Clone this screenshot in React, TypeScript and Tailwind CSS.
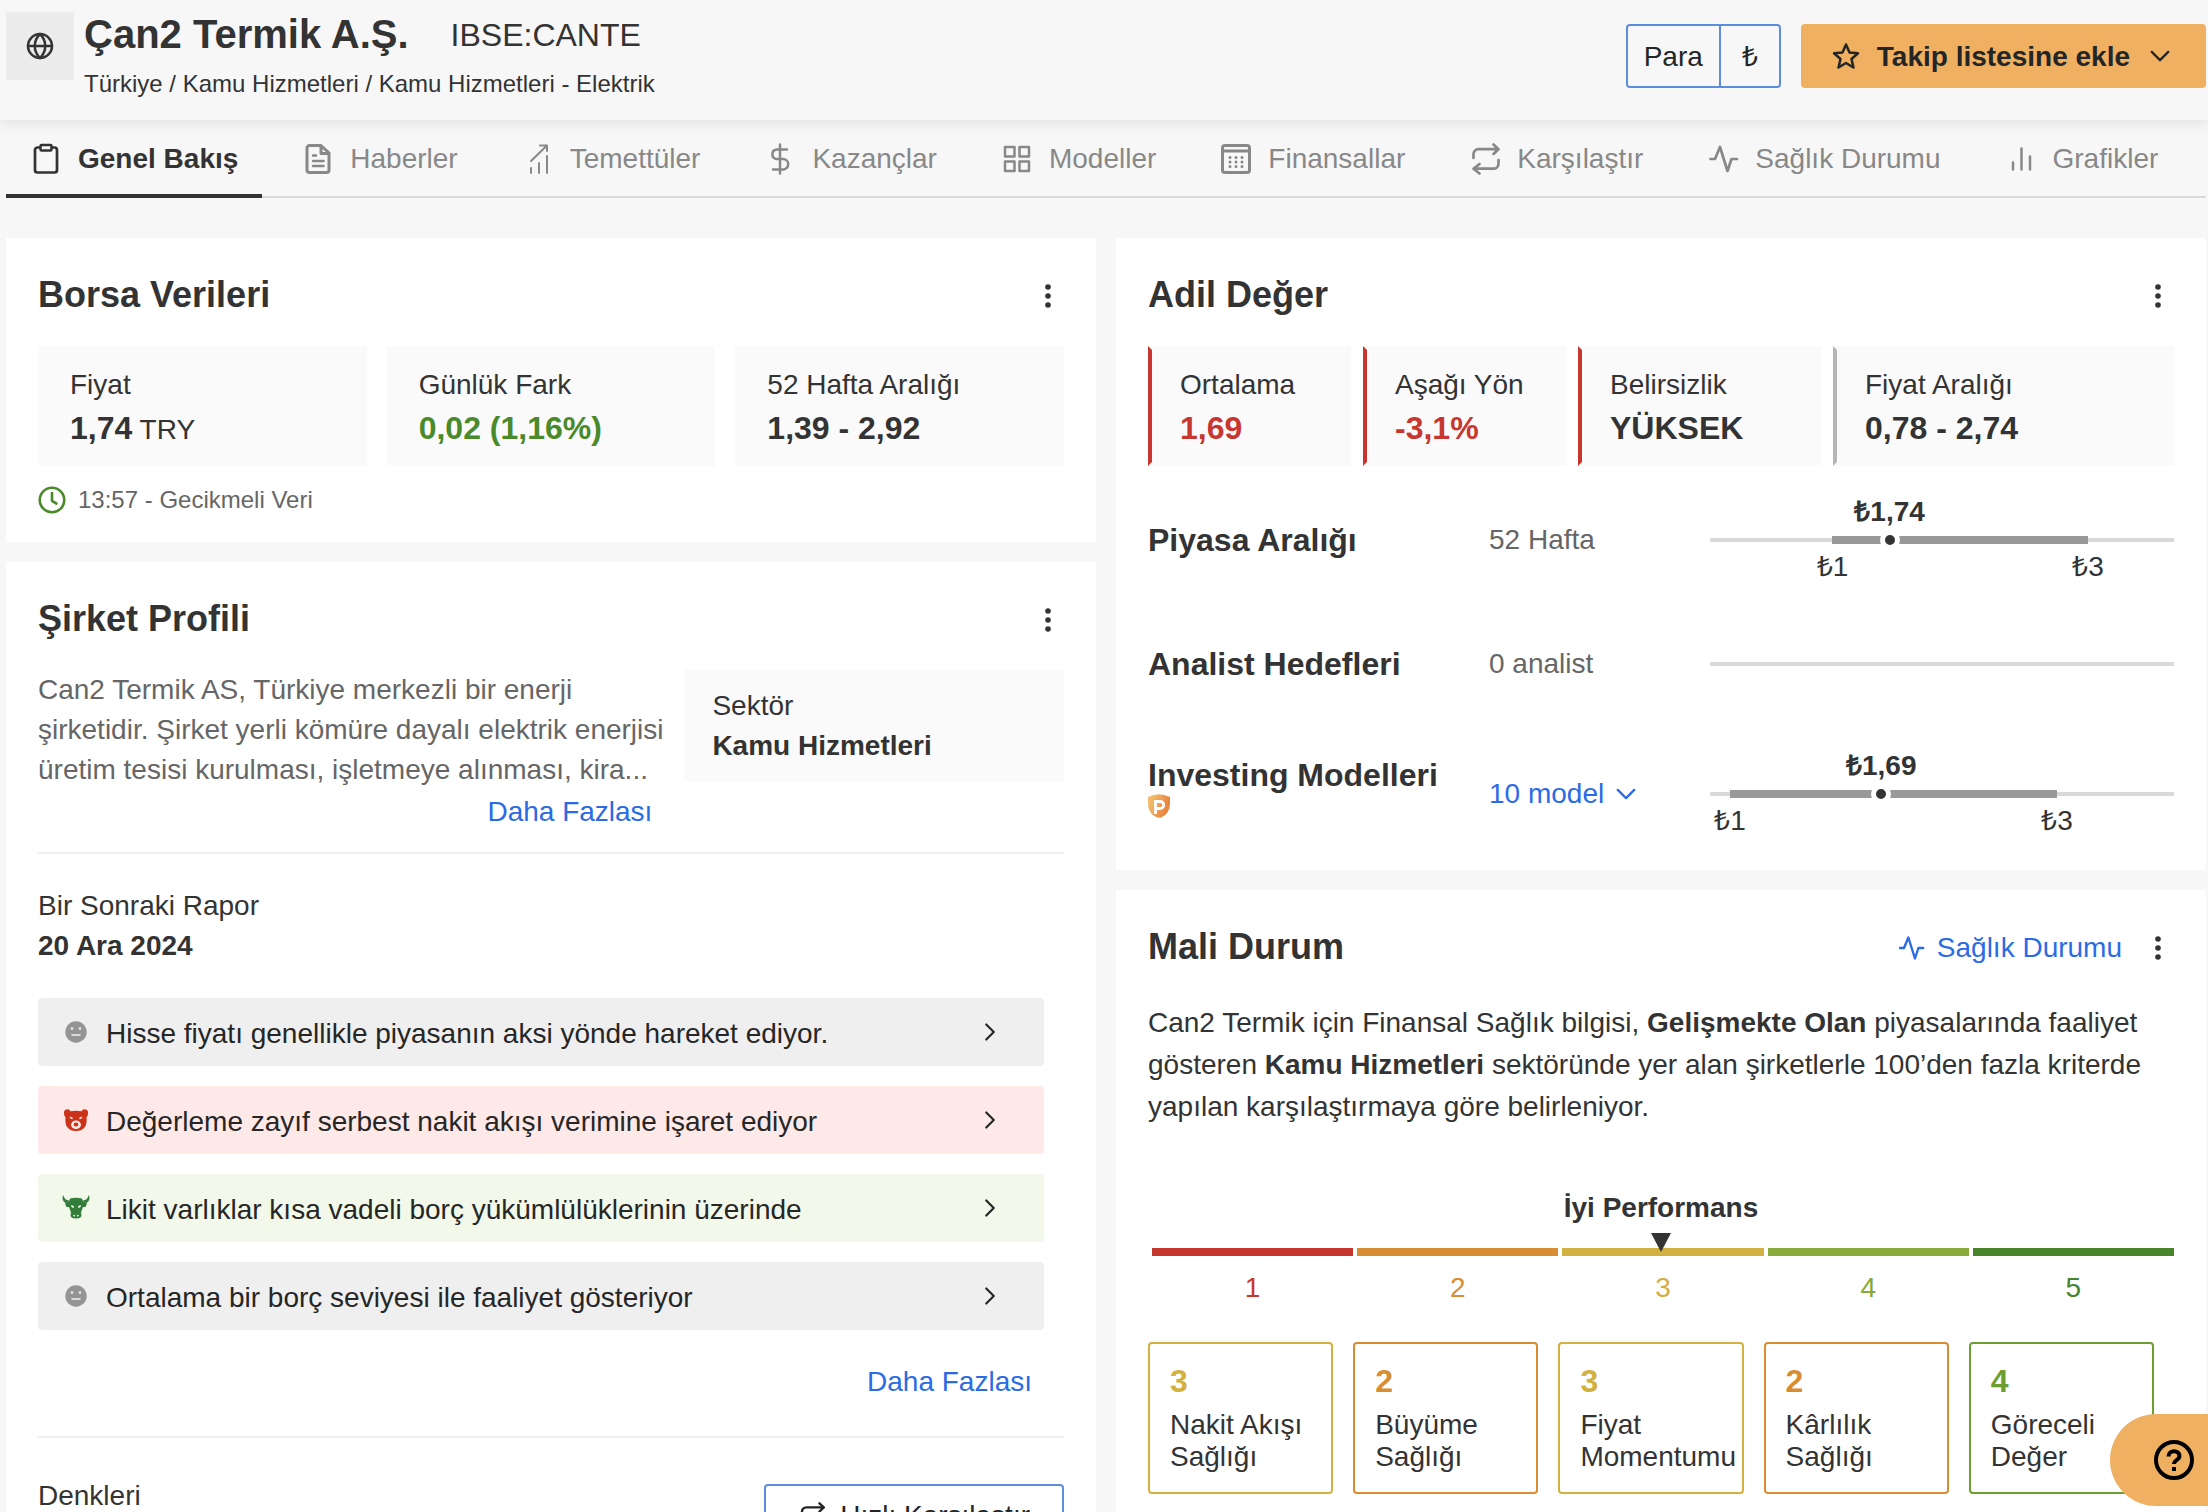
import type { ReactNode } from "react";
import clsx from "clsx";

type IconProps = {
  className?: string;
  children: ReactNode;
  strokeWidth?: number;
};

function Icon({ className = "size-8", children, strokeWidth = 3 }: IconProps) {
  return (
    <svg
      aria-hidden="true"
      className={clsx("shrink-0", className)}
      fill="none"
      stroke="currentColor"
      strokeLinecap="round"
      strokeLinejoin="round"
      strokeWidth={strokeWidth}
      viewBox="0 0 32 32"
    >
      {children}
    </svg>
  );
}

const pulsePath = <path d="M3.500 16h4.500l5-12 7.500 24 4-12H30" strokeWidth={2.7} />;

const comparePaths = (
  <>
    <path d="M24.500 1.500l5 4.700-5 4.700M29 6.200H9.500a5 5 0 0 0-5 5V15" strokeWidth={2.7} />
    <path d="M10.500 21l-6 4.700 6 4.800M5 25.700h19.500a5 5 0 0 0 5-5V17" strokeWidth={2.7} />
  </>
);

const tabs = [
  {
    label: "Genel Bakış",
    active: true,
    icon: (
      <>
        <path d="M10 4.500H7.500a2.500 2.500 0 0 0-2.500 2.500v20a2.500 2.500 0 0 0 2.500 2.500h17a2.500 2.500 0 0 0 2.500-2.500V7a2.500 2.500 0 0 0-2.500-2.500H22" strokeWidth={2.7} />
        <rect height="5.500" rx="1" strokeWidth={2.500} width="11" x="10.500" y="2" />
      </>
    ),
  },
  {
    label: "Haberler",
    icon: (
      <>
        <path d="M19 2.500H7.500A2.500 2.500 0 0 0 5 5v22a2.500 2.500 0 0 0 2.500 2.500h17A2.500 2.500 0 0 0 27 27V10zM19 3v7.500h7.500" />
        <path d="M11 12.500h3M11 18h10.500M11 23h10.500" strokeWidth={2.500} />
      </>
    ),
  },
  {
    label: "Temettüler",
    icon: (
      <path
        d="M9 25v5M17 20v10M25 13v17M9 18L25 2.500M18 2.500h7v5.500"
        strokeWidth={2}
      />
    ),
  },
  {
    label: "Kazançlar",
    icon: (
      <path d="M16 1.500v29M23 6.500H12.500a4.800 4.800 0 0 0 0 9.500h6.500a5 5 0 0 1 0 10.500H9" strokeWidth={2.5} />
    ),
  },
  {
    label: "Modeller",
    icon: (
      <path
        d="M4 4h9.500v9.500H4zM18.500 4H28v9.500h-9.500zM4 18.500h9.500V28H4zM18.500 18.500H28V28h-9.500z"
        strokeWidth={2.5}
      />
    ),
  },
  {
    label: "Finansallar",
    icon: (
      <>
        <rect height="27" rx="2.500" width="27" x="2.500" y="2.500" />
        <path d="M3 8h26" />
        <path
          d="M10 14.500h.01M16 14.500h.01M22 14.500h.01M10 19h.01M16 19h.01M22 19h.01M10 23.500h.01M16 23.500h.01M22 23.500h.01"
        />
      </>
    ),
  },
  { label: "Karşılaştır", icon: comparePaths },
  { label: "Sağlık Durumu", icon: pulsePath },
  {
    label: "Grafikler",
    icon: <path d="M8 19.500v7M16.500 5.500v21M25 13.500v13" strokeWidth={2.5} />,
  },
];

const priceStats = [
  { label: "Fiyat", value: "1,74", unit: "TRY", color: "text-[#333]" },
  { label: "Günlük Fark", value: "0,02 (1,16%)", color: "text-[#4a8a2a]" },
  { label: "52 Hafta Aralığı", value: "1,39 - 2,92", color: "text-[#333]" },
];

const fairValueStats = [
  { label: "Ortalama", value: "1,69", color: "text-[#c7372f]", edge: "border-l-[#c7372f]" },
  { label: "Aşağı Yön", value: "-3,1%", color: "text-[#c7372f]", edge: "border-l-[#c7372f]" },
  { label: "Belirsizlik", value: "YÜKSEK", color: "text-[#333]", edge: "border-l-[#c7372f]" },
  { label: "Fiyat Aralığı", value: "0,78 - 2,74", color: "text-[#333]", edge: "border-l-[#b5b5b5]" },
];

const insights = [
  { tone: "neutral", text: "Hisse fiyatı genellikle piyasanın aksi yönde hareket ediyor." },
  { tone: "bear", text: "Değerleme zayıf serbest nakit akışı verimine işaret ediyor" },
  { tone: "bull", text: "Likit varlıklar kısa vadeli borç yükümlülüklerinin üzerinde" },
  { tone: "neutral", text: "Ortalama bir borç seviyesi ile faaliyet gösteriyor" },
] as const;

const toneBackground = {
  neutral: "bg-[#efefef]",
  bear: "bg-[#fde9e8]",
  bull: "bg-[#f2f8ea]",
};

const scale = [
  { score: 1, bar: "bg-[#c5372d]", text: "text-[#c5372d]" },
  { score: 2, bar: "bg-[#d98d33]", text: "text-[#d98d33]" },
  { score: 3, bar: "bg-[#d3b140]", text: "text-[#d3b140]" },
  { score: 4, bar: "bg-[#88aa38]", text: "text-[#88aa38]" },
  { score: 5, bar: "bg-[#488429]", text: "text-[#488429]" },
];

const healthScores = [
  { score: 3, label: "Nakit Akışı Sağlığı", border: "border-[#d3b140]", text: "text-[#d3b140]" },
  { score: 2, label: "Büyüme Sağlığı", border: "border-[#d98d33]", text: "text-[#d98d33]" },
  { score: 3, label: "Fiyat Momentumu", border: "border-[#d3b140]", text: "text-[#d3b140]" },
  { score: 2, label: "Kârlılık Sağlığı", border: "border-[#d98d33]", text: "text-[#d98d33]" },
  { score: 4, label: "Göreceli Değer", border: "border-[#6d9e31]", text: "text-[#6d9e31]" },
];

export default function App() {
  return (
    <div className="flex h-screen flex-col overflow-hidden bg-[#f7f7f7] font-['Liberation_Sans',Arial,sans-serif] text-[28px] leading-10 text-[#333]">
      <Header />
      <Tabs />
      <main className="mt-10 grid grow grid-cols-2 items-stretch gap-5 pr-0.5 pl-1.5">
        <div className="flex flex-col gap-5">
          <PriceCard />
          <ProfileCard />
        </div>
        <div className="flex flex-col gap-5">
          <FairValueCard />
          <HealthCard />
        </div>
      </main>
      <button
        aria-label="Yardım"
        className="fixed right-0 bottom-1.5 flex h-[92px] w-[98px] items-center justify-start rounded-l-full bg-[#efb062] pl-[42px] text-black"
        type="button"
      >
        <svg aria-hidden="true" className="size-11" fill="none" stroke="currentColor" strokeWidth="4" viewBox="0 0 44 44">
          <circle cx="22" cy="22" r="18" />
          <path d="M16.500 18.500c0-7 11-7 11-.5 0 4-5.500 4-5.500 8" />
          <path d="M22 29v4" />
        </svg>
      </button>
    </div>
  );
}

function Header() {
  return (
    <header className="relative z-10 flex h-[120px] shrink-0 items-start justify-between bg-[#f7f7f7] pr-0.5 pl-1.5 shadow-[0_2px_14px_rgba(0,0,0,0.1)]">
      <div className="flex pt-3">
        <div className="flex size-[68px] items-center justify-center bg-[#ececec]">
          <Icon className="size-8" strokeWidth={2.5}>
            <circle cx="16" cy="16" r="12" />
            <path d="M4 16h24M16 4c-7 7-7 17 0 24M16 4c7 7 7 17 0 24" />
          </Icon>
        </div>
        <div className="-mt-1 pl-2.5">
          <div className="flex items-center gap-[42px]">
            <h1 className="text-[40px] leading-[52px] font-bold">Çan2 Termik A.Ş.</h1>
            <span className="pt-0.5 text-[32px]">IBSE:CANTE</span>
          </div>
          <p className="pt-1 text-2xl leading-10">Türkiye / Kamu Hizmetleri / Kamu Hizmetleri - Elektrik</p>
        </div>
      </div>
      <div className="flex gap-5 pt-6">
        <button className="flex h-16 items-stretch rounded border-2 border-[#5b8fdd] text-[#232526]" type="button">
          <span className="flex items-center px-4 pt-0.5">Para</span>
          <span className="flex w-[60px] items-center justify-center border-l-2 border-[#5b8fdd] pt-0.5">₺</span>
        </button>
        <button
          className="flex h-16 items-center rounded bg-[#efb062] pr-[34px] pl-[29px] font-bold text-[#232526]"
          type="button"
        >
          <Icon className="size-8" strokeWidth={2.5}>
            <path d="M16 4.500l3.500 8 8.500.8-6.500 5.700 2 8.500-7.500-4.500-7.500 4.500 2-8.500L4 13.300l8.500-.8z" />
          </Icon>
          <span className="pt-0.5 pr-[18px] pl-[15px]">Takip listesine ekle</span>
          <ChevronDown />
        </button>
      </div>
    </header>
  );
}

function Tabs() {
  return (
    <nav className="mr-0.5 ml-1.5 flex h-[78px] shrink-0 gap-4 border-b-2 border-[#d9d9d9]">
      {tabs.map(({ label, icon, active }) => (
        <a
          key={label}
          className={clsx(
            "-mb-0.5 flex items-center gap-4 border-b-4 px-6 pt-1 whitespace-nowrap",
            active ? "border-[#333] font-bold text-[#333]" : "border-transparent text-[#888]",
          )}
          href="#"
        >
          <Icon>{icon}</Icon>
          {label}
        </a>
      ))}
    </nav>
  );
}

type CardProps = {
  title: string;
  children: ReactNode;
  action?: ReactNode;
  className?: string;
};

function Card({ title, children, action, className }: CardProps) {
  return (
    <section className={clsx("bg-white px-8 pt-8", className)}>
      <div className="mb-7 flex h-12 items-center justify-between">
        <h2 className="pt-0.5 text-4xl leading-[48px] font-bold">{title}</h2>
        <div className="flex items-center gap-5 pt-1">
          {action}
          <button aria-label="Menü" className="flex w-8 flex-col items-center" type="button">
            <svg aria-hidden="true" className="h-8 w-8" fill="#333" viewBox="0 0 32 32">
              <circle cx="16" cy="7" r="2.800" />
              <circle cx="16" cy="16" r="2.800" />
              <circle cx="16" cy="25" r="2.800" />
            </svg>
          </button>
        </div>
      </div>
      {children}
    </section>
  );
}

function PriceCard() {
  return (
    <Card title="Borsa Verileri">
      <div className="grid grid-cols-3 gap-5">
        {priceStats.map(({ label, value, unit, color }) => (
          <div key={label} className="bg-[#fafafa] px-8 py-[17px]">
            <div className="leading-[44px]">{label}</div>
            <div className={clsx("text-[32px] leading-[42px] font-bold", color)}>
              {value}
              {unit ? <span className="text-[28px] leading-none font-normal"> {unit}</span> : null}
            </div>
          </div>
        ))}
      </div>
      <div className="flex items-center gap-3 pt-4 pb-6 text-2xl leading-9 text-[#666]">
        <Icon className="size-7 text-[#4a8a2a]" strokeWidth={3}>
          <circle cx="16" cy="16" r="14" />
          <path d="M16 8v9l5 3" />
        </Icon>
        13:57 - Gecikmeli Veri
      </div>
    </Card>
  );
}

function ProfileCard() {
  return (
    <Card className="grow" title="Şirket Profili">
      <div className="flex items-start border-b-2 border-[#f0f0f0] pb-5">
        <div className="flex grow basis-0 flex-col">
          <p className="line-clamp-3 text-[#666]">
            Can2 Termik AS, Türkiye merkezli bir enerji
            <br />
            şirketidir. Şirket yerli kömüre dayalı elektrik enerjisi
            <br />
            üretim tesisi kurulması, işletmeye alınması, kira...
          </p>
          <a className="self-end pt-0.5 pr-8 text-[#2b6be4]" href="#">
            Daha Fazlası
          </a>
        </div>
        <div className="w-[37%] bg-[#fafafa] px-7 py-4">
          <div>Sektör</div>
          <div className="font-bold">Kamu Hizmetleri</div>
        </div>
      </div>
      <div className="pt-8">Bir Sonraki Rapor</div>
      <div className="font-bold">20 Ara 2024</div>
      <ul className="flex flex-col gap-5 pt-8 pr-5">
        {insights.map(({ tone, text }) => (
          <li key={text}>
            <button
              className={clsx(
                "flex h-[68px] w-full items-center rounded pr-11 pl-6 text-left text-[#262626]",
                toneBackground[tone],
              )}
              type="button"
            >
              <ToneIcon tone={tone} />
              <span className="grow pt-1 pl-4">{text}</span>
              <Icon className="size-5" strokeWidth={3.5}>
                <path d="M10 4l12 12-12 12" />
              </Icon>
            </button>
          </li>
        ))}
      </ul>
      <div className="border-b-2 border-[#f0f0f0] pt-8 pr-8 pb-[34px] text-right">
        <a className="text-[#2b6be4]" href="#">
          Daha Fazlası
        </a>
      </div>
      <div className="flex items-start justify-between pt-[38px]">
        <span>Denkleri</span>
        <button
          className="mt-2 flex h-16 items-center gap-3.5 rounded border-2 border-[#5b8fdd] px-8 text-[#232526]"
          type="button"
        >
          <Icon className="size-7">{comparePaths}</Icon>
          Hızlı Karşılaştır
        </button>
      </div>
    </Card>
  );
}

function FairValueCard() {
  return (
    <Card className="pb-2" title="Adil Değer">
      <div className="grid grid-cols-[203fr_203fr_243fr_341fr] gap-3">
        {fairValueStats.map(({ label, value, color, edge }) => (
          <div key={label} className={clsx("border-4 border-[#fafafa] bg-[#fafafa] py-[13px] pl-7", edge)}>
            <div className="leading-[44px]">{label}</div>
            <div className={clsx("text-[32px] leading-[42px] font-bold", color)}>{value}</div>
          </div>
        ))}
      </div>
      <div className="grid grid-cols-[341fr_221fr_464fr] grid-rows-[124px_124px_136px] items-center pt-3">
        <RangeTitle>Piyasa Aralığı</RangeTitle>
        <span className="text-[#666]">52 Hafta</span>
        <RangeBar current="₺1,74" from={26.4} high="₺3" low="₺1" position={38.7} to={81.5} />

        <RangeTitle>Analist Hedefleri</RangeTitle>
        <span className="text-[#666]">0 analist</span>
        <RangeBar />

        <RangeTitle>
          Investing Modelleri
          <ProBadge />
        </RangeTitle>
        <button className="flex items-center gap-2.5 text-[#2b6be4]" type="button">
          10 model
          <ChevronDown />
        </button>
        <RangeBar current="₺1,69" from={4.3} high="₺3" low="₺1" position={36.9} to={74.8} />
      </div>
    </Card>
  );
}

function RangeTitle({ children }: { children: ReactNode }) {
  return <h3 className="flex flex-col items-start text-[32px] leading-[38px] font-bold">{children}</h3>;
}

type RangeBarProps = {
  current?: string;
  from?: number;
  high?: string;
  low?: string;
  position?: number;
  to?: number;
};

function RangeBar({ current, from = 0, high, low, position = 0, to = 0 }: RangeBarProps) {
  return (
    <div className="relative h-1 bg-[#d9d9d9]">
      {current ? (
        <>
          <div className="absolute -top-0.5 h-2 bg-[#999]" style={{ left: `${from}%`, width: `${to - from}%` }} />
          <div
            className="absolute top-1/2 size-5 -translate-x-1/2 -translate-y-1/2 rounded-full border-[5px] border-white bg-[#333]"
            style={{ left: `${position}%` }}
          />
          <span className="absolute bottom-2.5 -translate-x-1/2 font-bold" style={{ left: `${position}%` }}>
            {current}
          </span>
          <span className="absolute top-[9px] -translate-x-1/2" style={{ left: `${from}%` }}>
            {low}
          </span>
          <span className="absolute top-[9px] -translate-x-1/2" style={{ left: `${to}%` }}>
            {high}
          </span>
        </>
      ) : null}
    </div>
  );
}

function HealthCard() {
  return (
    <Card
      action={
        <a className="flex items-center gap-3 text-[#2b6be4]" href="#">
          <Icon className="size-7">{pulsePath}</Icon>
          Sağlık Durumu
        </a>
      }
      className="grow"
      title="Mali Durum"
    >
      <p className="pt-1 leading-[42px]">
        Can2 Termik için Finansal Sağlık bilgisi, <b>Gelişmekte Olan</b> piyasalarında faaliyet gösteren{" "}
        <b>Kamu Hizmetleri</b> sektöründe yer alan şirketlerle 100’den fazla kriterde yapılan karşılaştırmaya göre
        belirleniyor.
      </p>
      <div className="grid grid-cols-5 pt-[60px]">
        {scale.map(({ score, bar, text }) => (
          <div key={score} className="flex flex-col items-center">
            <div className="relative flex h-[60px] flex-col items-center justify-between">
              {score === 3 ? (
                <>
                  <span className="font-bold whitespace-nowrap">İyi Performans</span>
                  <svg aria-hidden="true" className="z-10 -mb-1 h-[19px] w-5" fill="#333" viewBox="0 0 20 19">
                    <path d="M0 0h20L10 19z" />
                  </svg>
                </>
              ) : null}
            </div>
            <div className="w-full pl-1">
              <div className={clsx("h-2", bar)} />
            </div>
            <span className={clsx("pt-3 pl-1", text)}>{score}</span>
          </div>
        ))}
      </div>
      <div className="grid grid-cols-5 pt-[34px]">
        {healthScores.map(({ score, label, border, text }) => (
          <div key={label} className={clsx("mr-5 rounded border-2 pt-[17px] pb-[19px] pl-5", border)}>
            <div className={clsx("text-[32px] leading-10 font-bold", text)}>{score}</div>
            <div className="pt-2 leading-8">{label}</div>
          </div>
        ))}
      </div>
    </Card>
  );
}

function ChevronDown() {
  return (
    <Icon className="size-6" strokeWidth={3}>
      <path d="M5 10.500l11 11 11-11" />
    </Icon>
  );
}

function ProBadge() {
  return (
    <svg aria-hidden="true" className="mb-3.5 h-6 w-[22px]" viewBox="0 0 22 24">
      <defs>
        <linearGradient id="pro" x1="0" x2="1" y1="0.2" y2="0.6">
          <stop offset="0.1" stopColor="#f2bd6c" />
          <stop offset="0.9" stopColor="#e8833f" />
        </linearGradient>
      </defs>
      <path d="M0 3Q11-2.500 22 3v6q0 10.500-8.500 14.200Q11 24.300 8 23 0 19 0 9z" fill="url(#pro)" />
      <path d="M7.500 20V7.500h4.700a3.500 3.500 0 0 1 0 7H7.500" fill="none" stroke="#fff" strokeWidth="2.800" />
    </svg>
  );
}

function ToneIcon({ tone }: { tone: "neutral" | "bear" | "bull" }) {
  if (tone === "bear") {
    return (
      <svg aria-hidden="true" className="size-7 shrink-0" viewBox="0 0 28 28">
        <path
          d="M2 7.500a3.500 3.500 0 0 1 6.500-2.300q5.500-1 11 0A3.500 3.500 0 0 1 26 7.500q0 2.500-1.500 3.500.8 7-2 10.500Q19.500 25 14 25t-8.500-3.500Q2.700 18 3.500 11 2 10 2 7.500z"
          fill="#cc3219"
        />
        <ellipse cx="14" cy="18.700" fill="#fde9e8" rx="5" ry="4.300" />
        <ellipse cx="14" cy="18.500" fill="#cc3219" rx="2.300" ry="2" />
        <path d="M8.500 11.500l1.500.8M19.500 11.500l-1.500.8" stroke="#fde9e8" strokeLinecap="round" strokeWidth="1.600" />
      </svg>
    );
  }

  if (tone === "bull") {
    return (
      <svg aria-hidden="true" className="size-7 shrink-0" viewBox="0 0 28 28">
        <path
          d="M1.200 1C-.5 5 1 9 6 10l1-3.500Q2.500 6 1.200 1zM26.800 1c1.700 4 .2 8-4.800 9l-1-3.500Q25.500 6 26.800 1z"
          fill="#337d3a"
        />
        <path
          d="M8 4.500q6-1.500 12 0l1.500 4 3.500 1-1.500 3.500H21l-2 5.500.5 2.500q0 3.500-5.500 3.500T8.500 21l.5-2.500-2-5.500H4.500L3 9.500l3.500-1z"
          fill="#337d3a"
        />
        <path d="M9.800 12l1.400 1M18.200 12l-1.400 1M12 21.500l.3.300M16 21.500l-.3.300" stroke="#f2f8ea" strokeLinecap="round" strokeWidth="1.600" />
      </svg>
    );
  }

  return (
    <svg aria-hidden="true" className="size-7 shrink-0" viewBox="0 0 28 28">
      <circle cx="14" cy="14" fill="#949494" r="10.700" />
      <circle cx="10" cy="10.500" fill="#efefef" r="1.300" />
      <circle cx="18" cy="10.500" fill="#efefef" r="1.300" />
      <path d="M10 17h8" stroke="#efefef" strokeLinecap="round" strokeWidth="1.600" />
    </svg>
  );
}
